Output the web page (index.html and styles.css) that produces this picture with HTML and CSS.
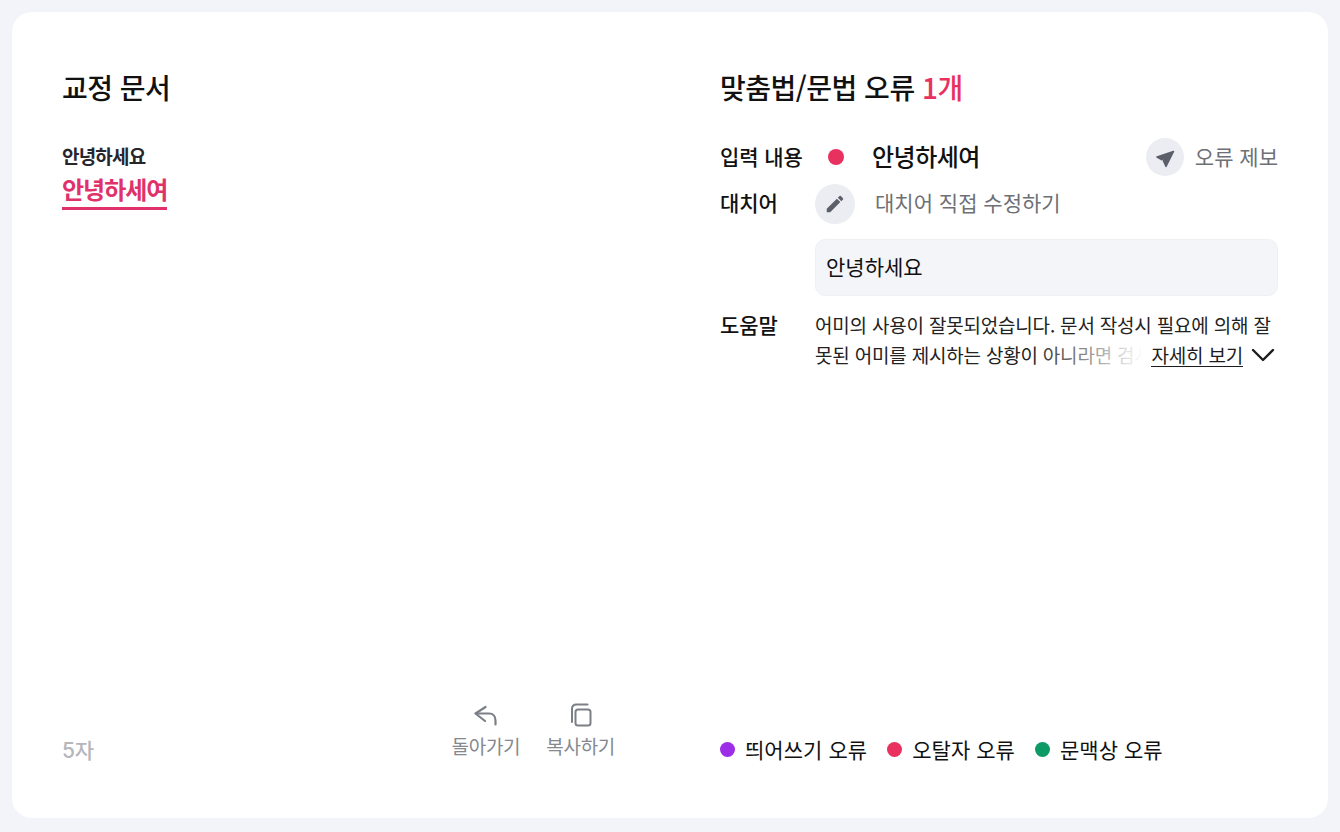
FILE: index.html
```html
<!DOCTYPE html>
<html lang="ko">
<head>
    <meta charset="UTF-8">
    <meta name="viewport" content="width=device-width, initial-scale=1.0">
    <title>교정 문서</title>
    <link rel="stylesheet" href="styles.css">
</head>
<body>
    <div class="card">
        <div class="col col-left">
            <h2 class="title">교정 문서</h2>
            <div class="doc">
                <p class="doc-plain">안녕하세요</p>
                <p class="doc-error"><span>안녕하세여</span></p>
            </div>
            <div class="left-footer">
                <span class="count">5자</span>
                <div class="actions">
                    <button class="action">
                        <svg width="24" height="24" viewBox="0 0 24 24" fill="none" stroke="#7b7f86" stroke-width="2.2" stroke-linecap="round" stroke-linejoin="round">
                            <path d="M11.500 4 1.500 10.500 11 18"/>
                            <path d="M2 10.500h13c4 0 6.500 3 6.500 7v4"/>
                        </svg>
                        돌아가기
                    </button>
                    <button class="action">
                        <svg width="24" height="24" viewBox="0 0 24 24" fill="none" stroke="#7b7f86" stroke-width="2" stroke-linecap="round" stroke-linejoin="round">
                            <rect x="6.500" y="6.500" width="15" height="16" rx="2.500"/>
                            <path d="M3 19V6C3 3 4.500 1.500 7.500 1.500h11"/>
                        </svg>
                        복사하기
                    </button>
                </div>
            </div>
        </div>
        <div class="col col-right">
            <h2 class="title">맞춤법/문법 오류 <span class="title-count">1개</span></h2>
            <div class="row row-input">
                <span class="label">입력 내용</span>
                <span class="dot dot-red dot-input"></span>
                <span class="input-word">안녕하세여</span>
                <div class="report">
                    <span class="round-btn round-report">
                        <svg width="24" height="24" viewBox="0 0 24 24" fill="#5b5f69" stroke="#5b5f69" stroke-width="1.500" stroke-linejoin="round"><path d="M20.500 6.500 4 12l5 2.800 5-4.300-3.500 5.500 2.500 5.500z"/></svg>
                    </span>
                    <span class="muted">오류 제보</span>
                </div>
            </div>
            <div class="row row-replace">
                <span class="label">대치어</span>
                <span class="round-btn round-edit">
                    <svg width="22" height="22" viewBox="0 0 24 24" fill="#5b5f69"><path d="M3 17.250V21h3.750L17.810 9.940l-3.750-3.750L3 17.250zM20.710 7.040a1 1 0 0 0 0-1.410l-2.340-2.340a1 1 0 0 0-1.410 0l-1.830 1.830 3.750 3.750 1.830-1.830z"/></svg>
                </span>
                <span class="muted muted-edit">대치어 직접 수정하기</span>
            </div>
            <div class="suggestion">안녕하세요</div>
            <div class="row row-help">
                <span class="label">도움말</span>
                <div class="help">
                    <p class="help-text">어미의 사용이 잘못되었습니다. 문서 작성시 필요에 의해 잘못된 어미를 제시하는 상황이 아니라면 검사</p>
                    <div class="more">
                        <a class="more-link">자세히 보기</a>
                        <svg width="24" height="14" viewBox="0 0 24 14" fill="none" stroke="#1c1c1e" stroke-width="2.400" stroke-linecap="round" stroke-linejoin="round"><path d="M2 2 12 12 22 2"/></svg>
                    </div>
                </div>
            </div>
            <div class="legend">
                <span class="legend-item"><span class="dot dot-purple"></span>띄어쓰기 오류</span>
                <span class="legend-item"><span class="dot dot-red"></span>오탈자 오류</span>
                <span class="legend-item"><span class="dot dot-green"></span>문맥상 오류</span>
            </div>
        </div>
    </div>
</body>
</html>
```

FILE: styles.css
```css
* {
    box-sizing: border-box;
}
html, body {
    height: 100%;
}
body {
    margin: 0;
    padding: 12px 12px 14px;
    background-color: #f2f4f9;
    font-family: "Noto Sans CJK KR", "Noto Sans", sans-serif;
    color: #111;
    overflow: hidden;
}
p, h2 {
    margin: 0;
}
.card {
    display: grid;
    grid-template-columns: 553px 558px;
    column-gap: 105px;
    height: 100%;
    padding: 55px 50px 55px;
    background-color: #fff;
    border-radius: 20px;
}
.col {
    display: flex;
    flex-direction: column;
    min-height: 0;
}
.title {
    font-size: 28px;
    line-height: 40px;
    font-weight: 500;
    letter-spacing: -0.5px;
}
.title-count {
    color: #e8315f;
}
.doc {
    margin-top: 36px;
}
.doc-plain {
    font-size: 19px;
    line-height: 26px;
    font-weight: 700;
    letter-spacing: -0.8px;
    color: #26262c;
}
.doc-error {
    margin-top: 4px;
    font-size: 24px;
    line-height: 32px;
    font-weight: 700;
    letter-spacing: -1px;
    color: #e0316a;
}
.doc-error span {
    display: inline-block;
    padding-bottom: 2px;
    border-bottom: 3px solid #e0316a;
}
.left-footer {
    display: flex;
    justify-content: space-between;
    align-items: flex-end;
    margin-top: auto;
}
.count {
    margin-bottom: -2px;
    font-family: Inter, "Noto Sans CJK KR", sans-serif;
    font-size: 21px;
    font-weight: 500;
    line-height: 28px;
    letter-spacing: -0.3px;
    color: #b4b6ba;
}
.actions {
    display: flex;
    gap: 26px;
    margin-bottom: 4px;
}
.action {
    display: flex;
    flex-direction: column;
    align-items: center;
    gap: 6px;
    padding: 0;
    border: none;
    background: none;
    font-family: inherit;
    font-size: 19px;
    line-height: 26px;
    letter-spacing: -0.3px;
    color: #85888e;
}
.row {
    display: flex;
    align-items: center;
}
.row-input {
    margin-top: 30px;
    height: 40px;
}
.label {
    width: 95px;
    flex-shrink: 0;
    padding-bottom: 2px;
    font-size: 21px;
    font-weight: 500;
    letter-spacing: -0.1px;
    color: #111;
}
.dot {
    display: inline-block;
    width: 16px;
    height: 16px;
    border-radius: 50%;
    flex-shrink: 0;
}
.dot-red {
    background-color: #e8315f;
}
.dot-purple {
    background-color: #9b2ee6;
}
.dot-green {
    background-color: #0c9a66;
}
.dot-input {
    margin-left: 13px;
}
.input-word {
    margin-left: 28px;
    padding-bottom: 4px;
    font-size: 24px;
    font-weight: 500;
    letter-spacing: -0.5px;
}
.report {
    display: flex;
    align-items: center;
    gap: 11px;
    margin-left: auto;
}
.round-btn {
    display: flex;
    align-items: center;
    justify-content: center;
    border-radius: 50%;
    background-color: #ebedf2;
}
.round-report {
    width: 38px;
    height: 38px;
}
.round-edit {
    width: 40px;
    height: 40px;
}
.muted {
    padding-bottom: 2px;
    font-size: 21px;
    color: #6e7075;
}
.muted-edit {
    margin-left: 20px;
    padding-bottom: 4px;
}
.row-replace {
    margin-top: 7px;
    height: 40px;
}
.row-replace .label {
    padding-bottom: 4px;
}
.suggestion {
    margin: 15px 0 0 95px;
    height: 57px;
    padding: 0 0 4px 10px;
    display: flex;
    align-items: center;
    font-size: 21px;
    color: #111;
    background-color: #f3f5f9;
    border: 1px solid #eef0f4;
    border-radius: 10px;
}
.row-help {
    align-items: flex-start;
    margin-top: 14px;
}
.row-help .label {
    line-height: 28px;
}
.help {
    position: relative;
    width: 463px;
    height: 60px;
    overflow: hidden;
}
.help-text {
    font-size: 19px;
    line-height: 30px;
    letter-spacing: -0.2px;
    color: #222;
}
.more {
    position: absolute;
    right: 0;
    bottom: 0;
    display: flex;
    align-items: center;
    gap: 8px;
    height: 30px;
    padding-left: 120px;
    padding-right: 3px;
    background: linear-gradient(to right, rgba(255,255,255,0) 0, #fff 112px);
}
.more-link {
    font-size: 19px;
    line-height: 22px;
    letter-spacing: -0.2px;
    color: #1c1c1e;
    border-bottom: 1px solid #1c1c1e;
}
.legend {
    display: flex;
    gap: 20px;
    margin-top: auto;
}
.legend-item {
    display: flex;
    align-items: center;
    gap: 10px;
    font-size: 21px;
    line-height: 28px;
    letter-spacing: 0.05px;
}
.legend-item .dot {
    width: 15px;
    height: 15px;
    margin-top: 1px;
}
```
